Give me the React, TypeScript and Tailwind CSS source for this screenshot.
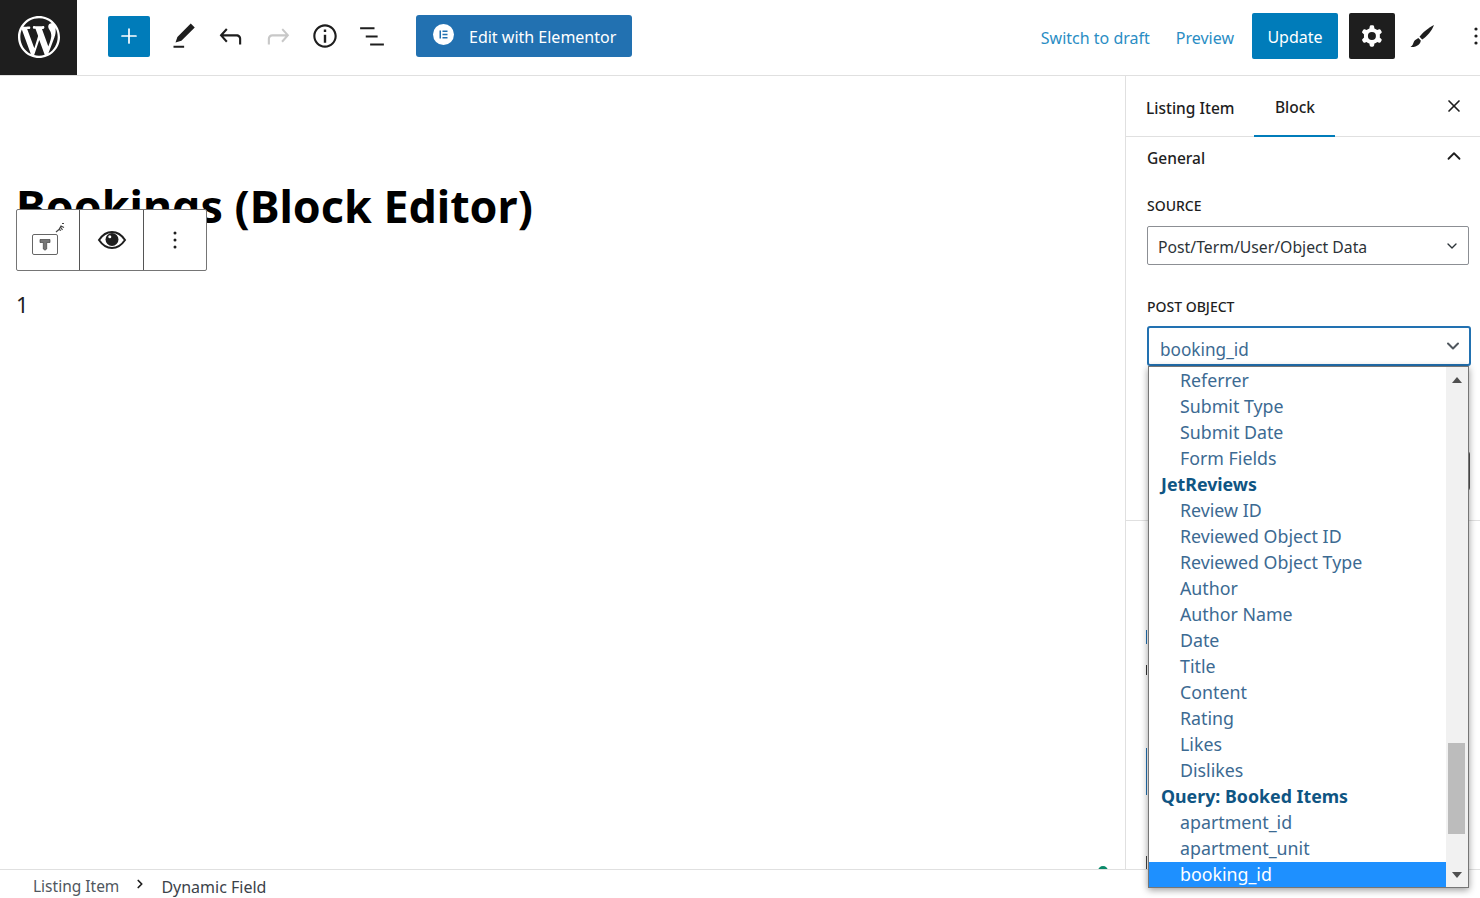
import { X, ChevronUp, ChevronDown, ChevronRight, Plus } from 'lucide-react';

const FONT = "font-['Noto_Sans','Open_Sans',sans-serif]";

type Opt = { label: string; group?: boolean; selected?: boolean };

const options: Opt[] = [
  { label: 'Referrer' },
  { label: 'Submit Type' },
  { label: 'Submit Date' },
  { label: 'Form Fields' },
  { label: 'JetReviews', group: true },
  { label: 'Review ID' },
  { label: 'Reviewed Object ID' },
  { label: 'Reviewed Object Type' },
  { label: 'Author' },
  { label: 'Author Name' },
  { label: 'Date' },
  { label: 'Title' },
  { label: 'Content' },
  { label: 'Rating' },
  { label: 'Likes' },
  { label: 'Dislikes' },
  { label: 'Query: Booked Items', group: true },
  { label: 'apartment_id' },
  { label: 'apartment_unit' },
  { label: 'booking_id', selected: true },
];

function WpLogo() {
  return (
    <svg width="42" height="42" viewBox="0 0 20 20" fill="#fff">
      <path d="M20 10c0-5.51-4.49-10-10-10C4.480 0 0 4.490 0 10c0 5.520 4.480 10 10 10 5.510 0 10-4.480 10-10zM7.780 15.370L4.370 6.220c.55-.02 1.170-.08 1.170-.08.5-.06.44-1.130-.06-1.110 0 0-1.450.11-2.370.11-.18 0-.37 0-.58-.01C4.120 2.690 6.870 1.090 10 1.090c2.330 0 4.450.87 6.050 2.340-.68-.11-1.650.39-1.650 1.580 0 .74.45 1.360.9 2.100.35.61.55 1.360.55 2.460 0 1.490-1.400 5-1.400 5l-3.030-8.370c.54-.02.82-.17.82-.17.5-.05.44-1.250-.06-1.220 0 0-1.440.12-2.380.12-.87 0-2.330-.12-2.330-.12-.5-.03-.56 1.200-.06 1.220l.92.08 1.260 3.410zM17.410 10c.24-.64.74-1.870.43-4.250.7 1.290 1.050 2.710 1.050 4.250 0 3.290-1.730 6.240-4.400 7.780.97-2.590 1.940-5.200 2.920-7.780zM6.100 18.090C3.120 16.650 1.110 13.530 1.110 10c0-1.300.23-2.480.72-3.590C3.250 10.300 4.670 14.200 6.100 18.090zm4.030-6.630l2.580 6.980c-.86.29-1.760.45-2.710.45-.79 0-1.570-.11-2.290-.33.81-2.380 1.620-4.740 2.420-7.100z" />
    </svg>
  );
}

function Slot({ children }: { children: React.ReactNode }) {
  return <div className="w-[47px] h-[36px] flex items-center justify-center overflow-visible">{children}</div>;
}

function Toolbar() {
  return (
    <header className="h-[76px] flex border-b border-[#e0e0e0] bg-white shrink-0">
      <div className="w-[77px] bg-[#1e1e1e] flex items-center justify-center shrink-0 pb-[2px]">
        <WpLogo />
      </div>
      <div className="flex-1 min-w-0 flex items-center pb-[3px]">
        <button className="ml-[31px] w-[42px] h-[41px] bg-[#007cba] rounded-[2px] flex items-center justify-center text-white">
          <Plus size={24} strokeWidth={1.7} />
        </button>
        <div className="ml-[10px] flex items-center">
          <Slot>
            <svg width="30" height="30" viewBox="0 0 24 24" fill="#1e1e1e">
              <path d="M20.600 5.100L17.400 2 6.700 12.700l-1.500 4.400 4.700-1.300L20.600 5.100zM3.600 21.400h8.500v-1.700H3.600v1.700z" />
            </svg>
          </Slot>
          <Slot>
            <svg width="34" height="34" viewBox="0 0 24 24" fill="#1e1e1e">
              <path d="M18.300 11.700c-.6-.6-1.400-.9-2.300-.9H6.700l2.900-3.300-1.100-1-4.500 5L8.500 16.500l1.100-1-2.900-3.200H16c.5 0 .9.200 1.200.5.3.3.5.8.5 1.200v4h1.500v-4c0-.9-.3-1.800-.9-2.300z" />
            </svg>
          </Slot>
          <Slot>
            <svg width="34" height="34" viewBox="0 0 24 24" fill="#c8c8c8">
              <path d="M15.600 6.500l-1.100 1 2.900 3.300H8c-.9 0-1.700.3-2.300.9-.6.6-.9 1.400-.9 2.300v4h1.500v-4c0-.4.200-.9.500-1.200.3-.3.700-.5 1.200-.5h9.200l-2.900 3.200 1.100 1 4.500-5-4.500-5z" />
            </svg>
          </Slot>
          <Slot>
            <svg width="32" height="32" viewBox="0 0 24 24" fill="#1e1e1e">
              <path d="M12 3.200c-4.800 0-8.800 3.900-8.800 8.800 0 4.800 3.900 8.800 8.800 8.800 4.800 0 8.800-3.900 8.800-8.800 0-4.800-4-8.800-8.800-8.800zm0 16c-4 0-7.200-3.300-7.200-7.200C4.800 8 8 4.800 12 4.800s7.200 3.300 7.200 7.200c0 4-3.200 7.200-7.200 7.200zM11.100 17h1.800v-6h-1.800v6zm0-8h1.800V7.200h-1.800V9z" />
            </svg>
          </Slot>
          <Slot>
            <svg width="30" height="30" viewBox="0 0 24 24" fill="#1e1e1e">
              <path d="M2.500 5h11.500v1.600H2.500zM7 11.500h9.500v1.600H7zM10.500 18h11v1.600h-11z" />
            </svg>
          </Slot>
        </div>
        <button className="ml-[21px] w-[216px] h-[42px] bg-[#2271b1] rounded-[3px] flex items-center text-white text-[16px] shrink-0">
          <span className="ml-[17px] w-[21px] h-[21px] -mt-[3px] rounded-full bg-white flex items-center justify-center">
            <svg width="11" height="11" viewBox="0 0 11 11" fill="#2271b1">
              <path d="M1.500 1.500h1.500v8H1.500zM4.500 1.500h5v1.500h-5zM4.500 4.700h5v1.500h-5zM4.500 8h5v1.500h-5z" />
            </svg>
          </span>
          <span className="ml-[15px] pt-[1px]">Edit with Elementor</span>
        </button>
        <div className="flex-1" />
        <a className="pt-[3px] text-[#2a8dc4] text-[16px]">Switch to draft</a>
        <a className="ml-[26px] pt-[3px] text-[#2a8dc4] text-[16px]">Preview</a>
        <button className="ml-[18px] w-[86px] h-[46px] pt-[2px] bg-[#007cba] rounded-[2px] text-white text-[16px]">
          Update
        </button>
        <button className="ml-[11px] w-[46px] h-[46px] bg-[#1e1e1e] rounded-[2px] flex items-center justify-center">
          <svg width="32" height="32" viewBox="0 0 24 24" fill="#fff">
            <path fillRule="evenodd" d="M10.289 4.836A1 1 0 0 1 11.275 4h1.306a1 1 0 0 1 .987.836l.244 1.466c.787.26 1.503.679 2.108 1.218l1.393-.522a1 1 0 0 1 1.216.437l.653 1.130a1 1 0 0 1-.23 1.273l-1.148.944a6.025 6.025 0 0 1 0 2.435l1.149.946a1 1 0 0 1 .23 1.272l-.653 1.130a1 1 0 0 1-1.216.437l-1.394-.522c-.605.54-1.320.958-2.108 1.218l-.244 1.466a1 1 0 0 1-.987.836h-1.306a1 1 0 0 1-.986-.836l-.244-1.466a5.995 5.995 0 0 1-2.108-1.218l-1.394.522a1 1 0 0 1-1.217-.436l-.653-1.131a1 1 0 0 1 .23-1.272l1.149-.946a6.026 6.026 0 0 1 0-2.435l-1.148-.944a1 1 0 0 1-.23-1.272l.653-1.131a1 1 0 0 1 1.217-.437l1.393.522a5.994 5.994 0 0 1 2.108-1.218l.244-1.466zM14.929 12a3 3 0 1 1-6 0 3 3 0 0 1 6 0z" />
          </svg>
        </button>
        <svg className="ml-[14px] shrink-0" width="26" height="26" viewBox="0 0 26 26" fill="#1e1e1e">
          <path d="M25 2C20 4.500 13.500 9.500 10.500 13.800L13.200 16.500C18 13.500 23 7.500 25 2z" />
          <path d="M9.300 15L11.800 17.500C11.500 21 8 24.500 1.500 24C4 22.500 4 20.500 5 18.500C6 16.800 8 15.800 9.300 15z" />
        </svg>
        <svg className="ml-[33px] -mr-[4px] shrink-0" width="16" height="24" viewBox="0 0 16 24" fill="#1e1e1e">
          <circle cx="8" cy="5" r="1.600" />
          <circle cx="8" cy="12" r="1.600" />
          <circle cx="8" cy="19" r="1.600" />
        </svg>
      </div>
    </header>
  );
}

function BlockToolbar() {
  return (
    <div className="absolute left-[16px] top-[133px] w-[191px] h-[62px] flex bg-white border border-[#757575] rounded-[2px]">
      <div className="w-[63px] border-r border-[#555] relative flex items-center justify-center">
        <svg className="absolute left-[15px] top-[12px]" width="36" height="34" viewBox="0 0 36 34" fill="none">
          <rect x="0.500" y="12.500" width="25" height="20" rx="1.500" stroke="#666" strokeWidth="1" />
          <path d="M8 17.500h10v3h-3.300V27l-1.700 1.200L11.300 27v-6.500H8z" fill="#777" stroke="#444" strokeWidth="0.700" />
          <path d="M24 10l3-2.500 2 1M27 7.500l2-3.500 3 1.500M30 1.500h2M28.500 5l2 3" stroke="#444" strokeWidth="1.200" />
        </svg>
      </div>
      <div className="w-[64px] border-r border-[#555] flex items-center justify-center">
        <svg width="30" height="24" viewBox="0 0 30 24">
          <path d="M2 12C6 6 10 4 15 4s9 2 13 8c-4 6-8 8-13 8S6 18 2 12z" fill="none" stroke="#1e1e1e" strokeWidth="2" />
          <circle cx="15" cy="11.500" r="6.500" fill="#1e1e1e" />
          <circle cx="12.800" cy="8.800" r="1.500" fill="#fff" />
        </svg>
      </div>
      <div className="flex-1 flex items-center justify-center">
        <svg width="6" height="24" viewBox="0 0 6 24" fill="#1e1e1e">
          <circle cx="3" cy="5" r="1.500" />
          <circle cx="3" cy="12" r="1.500" />
          <circle cx="3" cy="19" r="1.500" />
        </svg>
      </div>
    </div>
  );
}

function Dropdown() {
  return (
    <div className="absolute left-[22px] top-[290px] w-[321px] h-[522px] bg-white border border-[#767676] shadow-[0_2px_7px_rgba(0,0,0,0.4)] flex z-10 overflow-hidden">
      <ul className="flex-1 min-w-0">
        {options.map((o) => (
          <li
            key={o.label}
            className={
              'text-[17.8px] whitespace-nowrap ' +
              (o.group ? 'pl-[12px] font-bold text-[#0f5583] ' : 'pl-[31px] text-[#3c6a92] ') +
              (o.selected ? 'h-[26px] leading-[24px] bg-[#1e90ff] text-white mt-[1px]' : 'h-[26px] leading-[26px]')
            }
          >
            {o.label}
          </li>
        ))}
      </ul>
      <div className="w-[22px] bg-[#f1f1f1] flex flex-col items-center justify-between relative">
        <svg className="mt-[10px]" width="10" height="6" viewBox="0 0 10 6" fill="#505050"><path d="M5 0l5 6H0z" /></svg>
        <div className="absolute left-[2px] top-[376px] w-[17px] h-[91px] bg-[#bcbcbc]" />
        <svg className="mb-[9px]" width="10" height="6" viewBox="0 0 10 6" fill="#505050"><path d="M0 0h10L5 6z" /></svg>
      </div>
    </div>
  );
}

function Sidebar() {
  return (
    <aside className="w-[355px] shrink-0 border-l border-[#e0e0e0] relative bg-white">
      <div className="h-[61px] border-b border-[#e0e0e0] flex items-stretch pl-[20px] text-[15.5px] relative">
        <div className="h-full flex items-center pt-[5px] text-[#1e1e1e] font-medium">Listing Item</div>
        <div className="ml-[20px] w-[81px] h-[61px] flex items-center justify-center text-[#1e1e1e] font-medium border-b-[2px] border-[#007cba] pt-[5px]">Block</div>
        <button className="absolute right-[16px] top-[20px] text-[#1e1e1e]"><X size={20} strokeWidth={2} /></button>
      </div>
      <div className="px-[21px]">
        <div className="h-[43px] flex items-center justify-between text-[15.5px] font-medium text-[#1e1e1e]">
          General
          <ChevronUp size={22} strokeWidth={2} className="-mt-[6px] relative left-[6px]" />
        </div>
        <div className="mt-[17px] text-[14px] font-medium text-[#1e1e1e] h-[18px] leading-[18px]">SOURCE</div>
        <div className="mt-[11px] w-[322px] h-[39px] border border-[#8c8f94] rounded-[2px] flex items-center justify-between pl-[10px] pr-[8px] pt-[4px] text-[15.75px] text-[#2c3338]">
          Post/Term/User/Object Data
          <ChevronDown size={16} strokeWidth={2} className="-mt-[4px]" />
        </div>
        <div className="mt-[33px] text-[14px] font-medium text-[#1e1e1e] h-[18px] leading-[18px]">POST OBJECT</div>
        <div className="mt-[10px] w-[324px] h-[40px] border-2 border-[#2271b1] rounded-[3px] flex items-center justify-between pl-[11px] pr-[6px] pt-[7px] text-[17.2px] text-[#3c6a92]">
          booking_id
          <ChevronDown size={20} strokeWidth={2.4} className="text-[#50575e] -mt-[7px]" />
        </div>
        {/* hidden behind the open list */}
        <div className="mt-[85px] ml-[3px] w-[320px] h-[40px] border border-[#555] rounded-[3px]" />
      </div>
      <div className="mt-[29px] border-t border-[#e0e0e0]" />
      {/* bits of the hidden panel that stick out past the list's left edge */}
      <span className="absolute left-[20px] top-[554px] w-[1px] h-[14px] bg-[#2271b1]" />
      <span className="absolute left-[20px] top-[589px] w-[1px] h-[10px] bg-[#333]" />
      <span className="absolute left-[20px] top-[672px] w-[1px] h-[47px] bg-[#2271b1]" />
      <span className="absolute left-[20px] top-[780px] w-[1px] h-[13px] bg-[#444]" />
      <Dropdown />
    </aside>
  );
}

export default function App() {
  return (
    <div className={`w-[1480px] h-[898px] flex flex-col overflow-hidden bg-white ${FONT}`}>
      <Toolbar />
      <div className="flex-1 flex min-h-0">
        <main className="flex-1 relative overflow-hidden">
          <h1 className="absolute left-[16px] top-[100px] text-[44.8px] leading-[60px] font-bold text-black whitespace-nowrap">Bookings (Block Editor)</h1>
          <BlockToolbar />
          <p className="absolute left-[16px] top-[212px] text-[22px] text-[#1e1e1e]">1</p>
          <span className="absolute left-[1098px] top-[790px] w-[10px] h-[10px] rounded-full bg-[#0b8a6a]" />
        </main>
        <Sidebar />
      </div>
      <footer className="h-[29px] relative border-t border-[#e0e0e0] bg-white flex items-center pl-[33px] pt-[6px] text-[15.5px] text-[#50575e] shrink-0">
        Listing Item
        <ChevronRight size={14} strokeWidth={3} className="ml-[14px] text-[#1e1e1e] -mt-[6px]" />
        <span className="ml-[14px] text-[16px] text-[#3c434a]">Dynamic Field</span>
      </footer>
    </div>
  );
}
